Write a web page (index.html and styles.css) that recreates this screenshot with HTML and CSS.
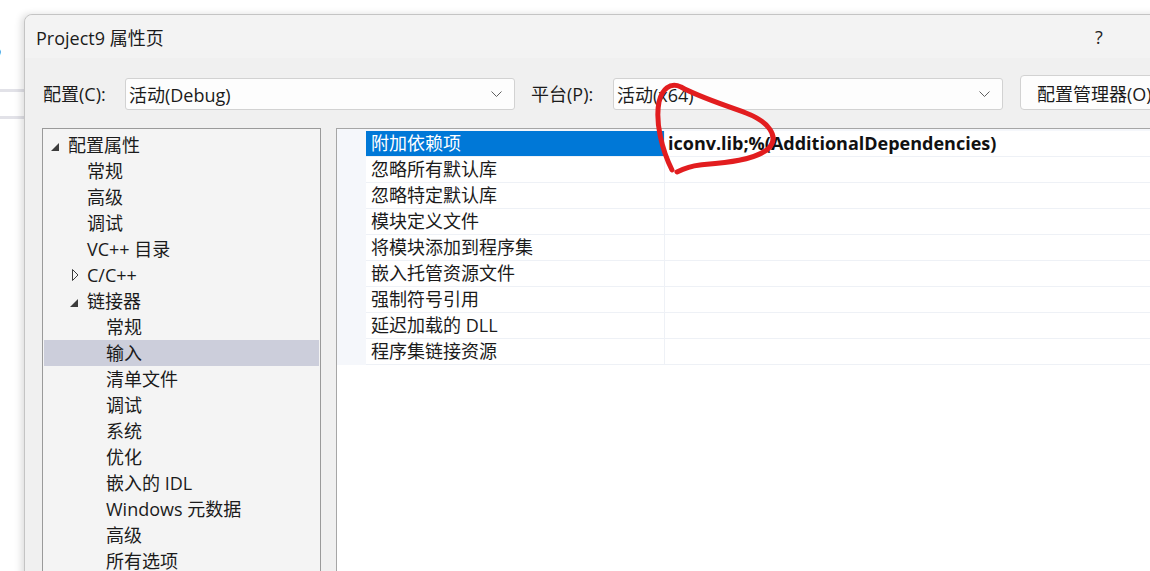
FILE: index.html
```html
<!DOCTYPE html>
<html lang="zh-CN">
<head>
<meta charset="utf-8">
<title>Project9 属性页</title>
<link rel="stylesheet" href="styles.css">
</head>
<body>
<div class="page">
  <div class="backdrop">
    <div class="bd-char">，</div>
    <div class="bd-line bd-line1"></div>
    <div class="bd-line bd-line2"></div>
  </div>
  <div class="dialog">
    <div class="titlebar">
      <span class="title">Project9 属性页</span>
      <span class="cap-btn help">?</span>
      <span class="cap-btn close"></span>
    </div>
    <div class="config-row">
      <span class="lbl">配置(C):</span>
      <div class="combo"><span>活动(Debug)</span><svg class="chev" width="11" height="7" viewBox="0 0 11 7"><path d="M0.5 0.5 L5.5 5.5 L10.5 0.5" fill="none" stroke="#5f5f5f" stroke-width="1"/></svg></div>
      <span class="lbl lbl2">平台(P):</span>
      <div class="combo"><span>活动(x64)</span><svg class="chev" width="11" height="7" viewBox="0 0 11 7"><path d="M0.5 0.5 L5.5 5.5 L10.5 0.5" fill="none" stroke="#5f5f5f" stroke-width="1"/></svg></div>
      <div class="btn">配置管理器(O)...</div>
    </div>
    <div class="main">
      <div class="tree">
        <div class="ti l0"><span class="tg"><svg width="8" height="8" viewBox="0 0 8 8"><path d="M8 0 L8 8 L0 8 Z" fill="#3c3c3c"/></svg></span>配置属性</div>
        <div class="ti l1"><span class="tg"></span>常规</div>
        <div class="ti l1"><span class="tg"></span>高级</div>
        <div class="ti l1"><span class="tg"></span>调试</div>
        <div class="ti l1"><span class="tg"></span>VC++ 目录</div>
        <div class="ti l1"><span class="tg tg-o"><svg width="7" height="12" viewBox="0 0 7 12"><path d="M0.5 0.5 L6 6 L0.5 11.5 Z" fill="none" stroke="#3c3c3c" stroke-width="1"/></svg></span>C/C++</div>
        <div class="ti l1"><span class="tg"><svg width="8" height="8" viewBox="0 0 8 8"><path d="M8 0 L8 8 L0 8 Z" fill="#3c3c3c"/></svg></span>链接器</div>
        <div class="ti l2"><span class="tg"></span>常规</div>
        <div class="ti l2 sel"><span class="tg"></span>输入</div>
        <div class="ti l2"><span class="tg"></span>清单文件</div>
        <div class="ti l2"><span class="tg"></span>调试</div>
        <div class="ti l2"><span class="tg"></span>系统</div>
        <div class="ti l2"><span class="tg"></span>优化</div>
        <div class="ti l2"><span class="tg"></span>嵌入的 IDL</div>
        <div class="ti l2"><span class="tg"></span>Windows 元数据</div>
        <div class="ti l2"><span class="tg"></span>高级</div>
        <div class="ti l2"><span class="tg"></span>所有选项</div>
        <div class="ti l2"><span class="tg"></span>命令行</div>
      </div>
      <div class="grid">
        <div class="rows">
          <div class="row"><div class="name selname">附加依赖项</div><div class="val bold">iconv.lib;%(AdditionalDependencies)</div></div>
          <div class="row"><div class="name">忽略所有默认库</div><div class="val"></div></div>
          <div class="row"><div class="name">忽略特定默认库</div><div class="val"></div></div>
          <div class="row"><div class="name">模块定义文件</div><div class="val"></div></div>
          <div class="row"><div class="name">将模块添加到程序集</div><div class="val"></div></div>
          <div class="row"><div class="name">嵌入托管资源文件</div><div class="val"></div></div>
          <div class="row"><div class="name">强制符号引用</div><div class="val"></div></div>
          <div class="row"><div class="name">延迟加载的 DLL</div><div class="val"></div></div>
          <div class="row"><div class="name">程序集链接资源</div><div class="val"></div></div>
        </div>
      </div>
    </div>
  </div>
  <svg class="mark" width="1150" height="571" viewBox="0 0 1150 571">
    <path d="M672 170 C662 150 655 122 659 102 C662 89 670 82 681 87 C699 97 722 104 746 113 C767 121 781 136 768 149 C753 161 722 163 700 165 C690 166 683 169 677 172" fill="none" stroke="#e21d1f" stroke-width="5" stroke-linecap="round" stroke-linejoin="round"/>
  </svg>
</div>
</body>
</html>
```
FILE: styles.css
```css
html, body {
  margin: 0;
  padding: 0;
  background: #ffffff;
}
body {
  width: 1150px;
  height: 571px;
  overflow: hidden;
  font-family: "Open Sans", "Noto Sans CJK SC", sans-serif;
  font-size: 18px;
  color: #1b1b1b;
}
.page {
  position: relative;
  display: flex;
  width: 1150px;
  height: 571px;
  overflow: hidden;
}
.backdrop {
  width: 24px;
  flex-shrink: 0;
  display: flex;
  flex-direction: column;
  overflow: hidden;
}
.bd-char {
  margin-top: 30px;
  margin-left: -9px;
  height: 30px;
  font-size: 24px;
  line-height: 30px;
  font-weight: bold;
  color: #1f2a4a;
}
.bd-line {
  height: 3px;
  background: #e2e2e8;
}
.bd-line1 { margin-top: 29px; }
.bd-line2 { margin-top: 24px; }
.dialog {
  width: 1200px;
  height: 620px;
  flex-shrink: 0;
  margin-top: 14px;
  background: #f0f0f0;
  border: 1px solid #c4c4c4;
  border-radius: 8px 0 0 0;
  box-shadow: -3px 0 7px rgba(0, 0, 0, 0.13);
}
.titlebar {
  height: 43px;
  display: flex;
  align-items: center;
  padding-left: 11px;
  background: #f3f3f3;
  border-radius: 8px 0 0 0;
}
.title {
  flex: 1;
  font-size: 18px;
}
.cap-btn {
  width: 46px;
  text-align: center;
  font-size: 18px;
  color: #222;
}
.close { width: 103px; }
.config-row {
  display: flex;
  align-items: flex-end;
  height: 35px;
  margin-top: 17px;
  padding-left: 18px;
}
.lbl {
  width: 82px;
  line-height: 32px;
  flex-shrink: 0;
}
.lbl2 {
  margin-left: 16px;
}
.combo {
  box-sizing: border-box;
  width: 390px;
  height: 32px;
  flex-shrink: 0;
  display: flex;
  align-items: center;
  justify-content: space-between;
  padding: 0 12px 0 3px;
  background: #fdfdfd;
  border: 1px solid #d2d2d2;
  border-radius: 3px;
}
.chev { display: block; }
.btn {
  box-sizing: border-box;
  height: 35px;
  margin-left: 17px;
  padding: 0 16px;
  display: flex;
  align-items: center;
  background: #fdfdfd;
  border: 1px solid #d2d2d2;
  border-radius: 4px;
  white-space: nowrap;
}
.main {
  display: flex;
  margin-top: 18px;
  padding-left: 17px;
  gap: 15px;
}
.tree {
  box-sizing: border-box;
  width: 279px;
  height: 500px;
  flex-shrink: 0;
  background: #f4f4f4;
  border: 1px solid #9a9a9a;
  padding: 3px 1px 0 1px;
}
.ti {
  height: 26px;
  line-height: 26px;
  display: flex;
  align-items: center;
  white-space: nowrap;
}
.l0 { padding-left: 5px; }
.l1 { padding-left: 24px; }
.l2 { padding-left: 43px; }
.tg {
  width: 19px;
  height: 26px;
  flex-shrink: 0;
  display: flex;
  align-items: center;
  padding-left: 2px;
  box-sizing: border-box;
}
.tg svg { display: block; margin-top: 3px; }
.tg-o { padding-left: 4px; }
.tg-o svg { margin-top: 0; }
.sel { background: #cccedb; }
.grid {
  box-sizing: border-box;
  width: 850px;
  height: 500px;
  flex-shrink: 0;
  background: #ffffff;
  border: 1px solid #a6a6a6;
}
.rows {
  background: #f5f7fb;
  padding: 2px 0 0 29px;
}
.row {
  display: flex;
  height: 25px;
  border-bottom: 1px solid #eef1f6;
  background: #ffffff;
}
.name {
  box-sizing: border-box;
  width: 298px;
  padding-left: 5px;
  line-height: 25px;
  white-space: nowrap;
}
.selname {
  background: #0078d7;
  color: #ffffff;
}
.val {
  flex: 1;
  border-left: 1px solid #eef1f6;
  padding-left: 3px;
  line-height: 25px;
  white-space: nowrap;
}
.bold {
  font-weight: bold;
  font-size: 18px;
  color: #111;
}
.mark {
  position: absolute;
  left: 0;
  top: 0;
  pointer-events: none;
}
```
